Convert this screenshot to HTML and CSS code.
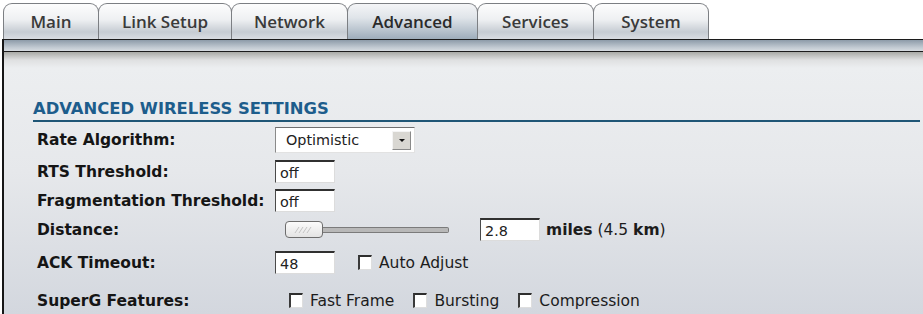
FILE: index.html
```html
<!DOCTYPE html>
<html lang="en">
<head>
  <meta charset="UTF-8" />
  <title>Advanced</title>
  <link rel="stylesheet" href="styles.css">
</head>
<body>

  <div class="tabs">
    <div class="tab tab-main">Main</div>
    <div class="tab tab-link">Link Setup</div>
    <div class="tab tab-network">Network</div>
    <div class="tab tab-advanced active">Advanced</div>
    <div class="tab tab-services">Services</div>
    <div class="tab tab-system">System</div>
  </div>

  <div class="panel">
    <div class="band"></div>
    <div class="content">
      <h2 class="section-title">ADVANCED WIRELESS SETTINGS</h2>

      <div class="row row-rate">
        <span class="label">Rate Algorithm:</span>
        <div class="select">
          <span class="select-text">Optimistic</span>
          <span class="select-btn"><span class="arrow"></span></span>
        </div>
      </div>

      <div class="row row-rts">
        <span class="label">RTS Threshold:</span>
        <div class="input">off</div>
      </div>

      <div class="row row-frag">
        <span class="label">Fragmentation Threshold:</span>
        <div class="input">off</div>
      </div>

      <div class="row row-distance">
        <span class="label">Distance:</span>
        <div class="slider">
          <span class="thumb">
            <svg width="20" height="8" viewBox="0 0 20 8">
              <path d="M1 7 L5 1 M5 7 L9 1 M9 7 L13 1 M13 7 L17 1" stroke="#c4c4c4" stroke-width="1" fill="none"/>
            </svg>
          </span>
          <span class="track"></span>
        </div>
        <div class="input input-distance">2.8</div>
        <span class="units"><b>miles</b> (4.5 <b>km</b>)</span>
      </div>

      <div class="row row-ack">
        <span class="label">ACK Timeout:</span>
        <div class="input">48</div>
        <span class="check check-auto"></span>
        <span class="check-text">Auto Adjust</span>
      </div>

      <div class="row row-superg">
        <span class="label">SuperG Features:</span>
        <span class="check check-fast"></span>
        <span class="check-text">Fast Frame</span>
        <span class="check check-next"></span>
        <span class="check-text">Bursting</span>
        <span class="check check-next"></span>
        <span class="check-text">Compression</span>
      </div>
    </div>
  </div>

</body>
</html>
```

FILE: styles.css
```css
body {
  margin: 0;
  background-color: #ffffff;
  font-family: "DejaVu Sans", Verdana, sans-serif;
  color: #1c1c1c;
}
.tabs {
  display: flex;
  padding: 3px 0 0 3px;
  height: 36px;
}
.tab {
  box-sizing: border-box;
  height: 36px;
  margin-right: -1px;
  border: 1px solid #7c7f83;
  border-bottom: none;
  border-radius: 9px 9px 0 0;
  background: linear-gradient(#fdfdfd 0, #eef0f2 45%, #c6ccd3 80%, #d9dde2 100%);
  font-family: "Open Sans", sans-serif;
  font-size: 17px;
  font-weight: 600;
  color: #3a3a3a;
  text-align: center;
  line-height: 36px;
}
.tab.active {
  background: linear-gradient(#f4f5f7 0, #dfe4e9 40%, #9eadbb 100%);
  color: #2a2a2a;
}
.tab-main { width: 96px; }
.tab-link { width: 134px; }
.tab-network { width: 117px; }
.tab-advanced { width: 131px; }
.tab-services { width: 117px; }
.tab-system { width: 116px; }
.panel {
  margin-left: 2px;
  border-left: 2px solid #161616;
  border-top: 1px solid #1c1c1c;
}
.band {
  height: 11px;
  background: linear-gradient(#8d9ba9, #c3cbd3 70%, #d6dbe0);
  border-bottom: 1px solid #1c1c1c;
}
.content {
  height: 262px;
  padding-left: 29px;
  background: linear-gradient(#a9aaa6 0, #dfe0e1 8px, #eceef0 16px, #e6e8eb 120px, #d3d7de 100%);
}
.section-title {
  margin: 0 3px 0 0;
  padding: 47px 0 2px 0;
  font-size: 16.4px;
  line-height: 19px;
  color: #1d5d8c;
  border-bottom: 2px solid #1f5676;
}
.row {
  display: flex;
  align-items: center;
  height: 23px;
  padding-left: 4px;
  font-size: 15.5px;
}
.label {
  width: 238px;
  font-weight: bold;
  color: #151515;
}
.row-rate { margin-top: 5px; height: 26px; }
.row-rts { margin-top: 7px; }
.row-frag { margin-top: 6px; }
.row-distance { margin-top: 6px; }
.row-ack { margin-top: 10px; }
.row-superg { margin-top: 18px; height: 17px; }
.select {
  box-sizing: border-box;
  display: flex;
  align-items: center;
  width: 140px;
  height: 26px;
  padding: 0 3px 0 10px;
  background-color: #ffffff;
  border: 1px solid #e2e2e2;
  border-top-color: #6f6f6f;
  border-left-color: #8a8a8a;
}
.select-text {
  flex: 1;
  font-size: 14.4px;
  color: #222;
}
.select-btn {
  box-sizing: border-box;
  display: flex;
  align-items: center;
  justify-content: center;
  width: 19px;
  height: 19px;
  background: #d9d7d2;
  border: 1px solid #8a8a8a;
  border-top-color: #f4f4f4;
  border-left-color: #f4f4f4;
}
.arrow {
  width: 0;
  height: 0;
  border-left: 3px solid transparent;
  border-right: 3px solid transparent;
  border-top: 3px solid #111;
}
.input {
  box-sizing: border-box;
  width: 60px;
  height: 23px;
  padding: 2px 0 0 4px;
  background-color: #ffffff;
  border: 1px solid #dcdcdc;
  border-top: 2px solid #303030;
  border-left-color: #4a4a4a;
  font-size: 14.4px;
  line-height: 18px;
  color: #222;
}
.slider {
  display: flex;
  align-items: center;
  margin-left: 10px;
}
.thumb {
  box-sizing: border-box;
  display: flex;
  align-items: center;
  justify-content: center;
  width: 38px;
  height: 17px;
  border: 1px solid #6d6d6d;
  border-radius: 4px;
  background: linear-gradient(#fbfbfb, #e4e4e4);
}
.track {
  box-sizing: border-box;
  width: 126px;
  height: 6px;
  background-color: #b8b8b8;
  border: 1px solid #7b7b7b;
  border-left: none;
  border-radius: 0 2px 2px 0;
}
.input-distance {
  margin-left: 31px;
}
.units {
  margin-left: 6px;
  color: #1c1c1c;
}
.check {
  box-sizing: border-box;
  width: 14px;
  height: 15px;
  background-color: #ffffff;
  border: 1px solid #dedede;
  border-top: 2px solid #2e2e2e;
  border-left: 2px solid #3a3a3a;
}
.check-text {
  margin-left: 7px;
  color: #1c1c1c;
}
.check-auto { margin-left: 23px; }
.check-fast { margin-left: 14px; }
.check-next { margin-left: 19px; }
```
